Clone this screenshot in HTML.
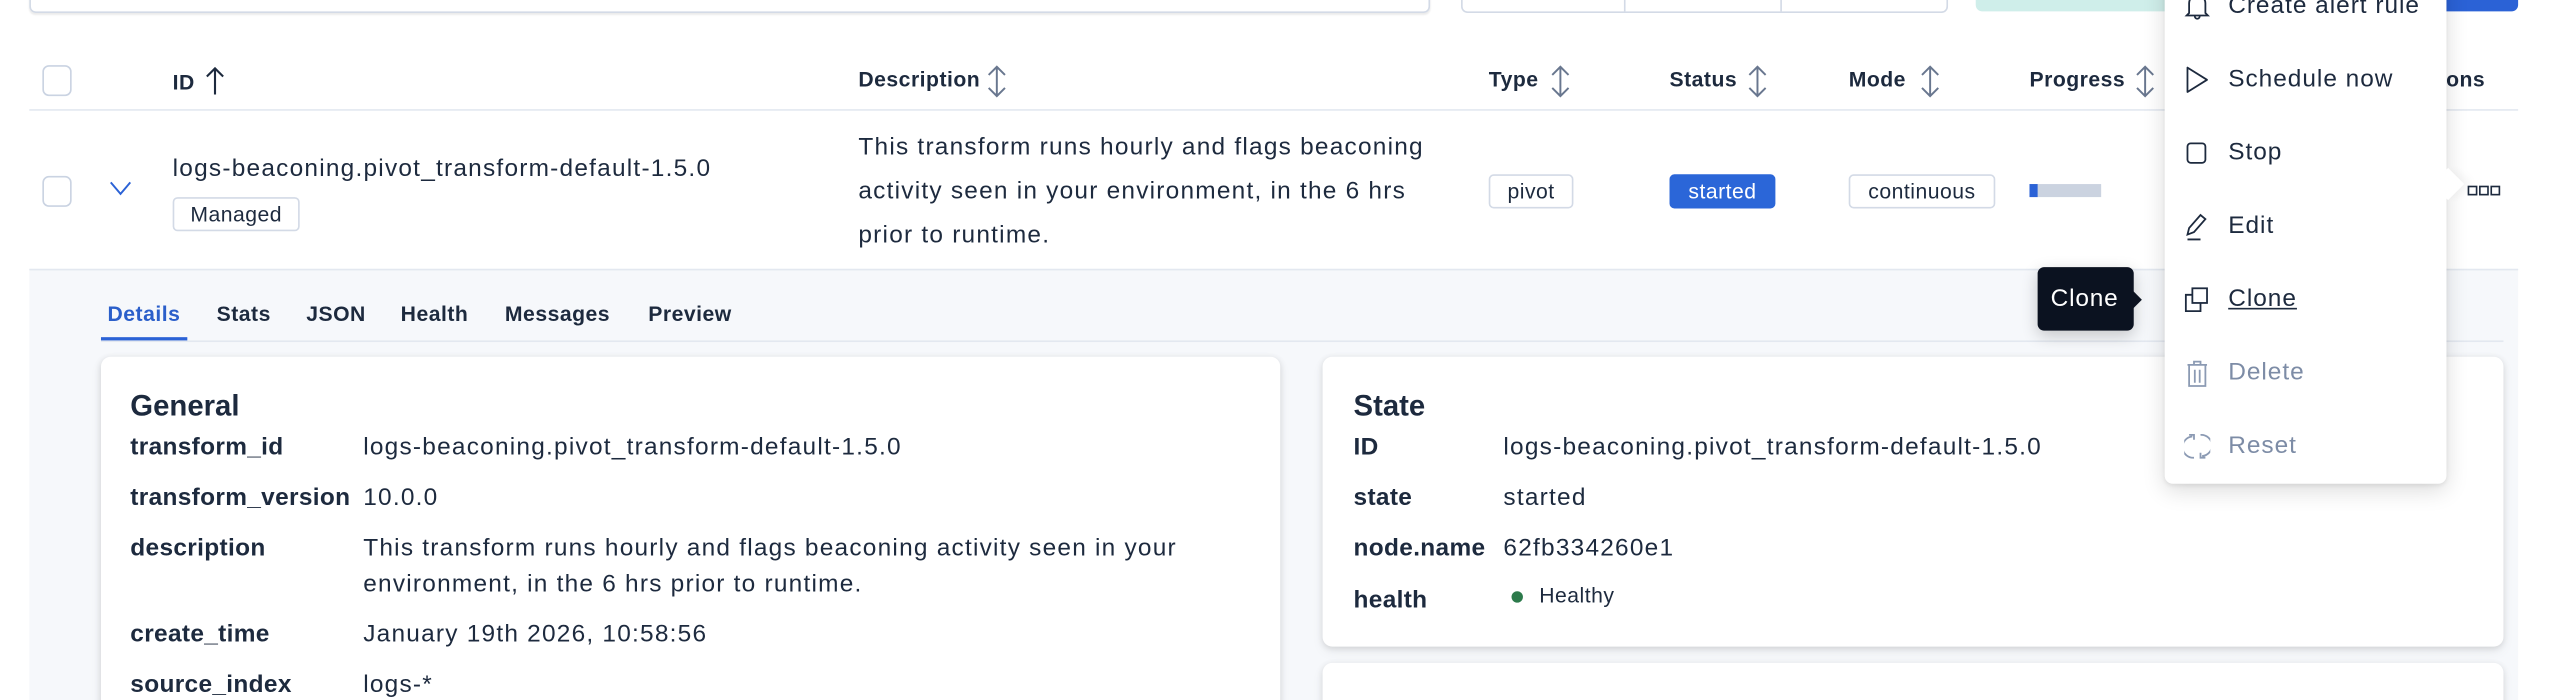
<!DOCTYPE html>
<html><head><meta charset="utf-8">
<style>
html,body{margin:0;padding:0;background:#fff;width:2554px;height:700px;overflow:hidden}
#w{position:absolute;left:0;top:0;width:1568px;height:430px;transform:scale(1.6288);transform-origin:0 0;font-family:"Liberation Sans",sans-serif;color:#1d2a3e;overflow:hidden}
.a{position:absolute;white-space:nowrap}
.hd{font-size:13px;font-weight:bold;color:#1d2a3e;top:41px;letter-spacing:0.3px}
.cb{position:absolute;width:16px;height:17px;border:1px solid #cad3e2;border-radius:4px;background:#fff}
.badge{position:absolute;height:19px;border:1px solid #d3dae6;border-radius:3px;background:#fff;font-size:13px;line-height:19px;text-align:center;color:#1d2a3e;letter-spacing:0.3px}
.t15{font-size:15px;letter-spacing:0.75px}
.lbl{font-size:15px;font-weight:bold;color:#1d2a3e;letter-spacing:0.2px}
.val{font-size:15px;color:#1d2a3e;letter-spacing:0.75px}
.panel{position:absolute;background:#fff;border-radius:6px;box-shadow:0 1px 4px rgba(0,0,0,.12),0 3px 8px rgba(0,0,0,.05)}
.mi{position:absolute;left:1368px;font-size:15px;color:#1d2a3e;letter-spacing:0.6px}
.ic{position:absolute;left:1341px}
.tab{position:absolute;top:185px;font-size:13px;font-weight:bold;letter-spacing:0.3px}
</style></head><body><div id="w">
<div class="a" style="left:18px;top:-10px;width:858px;height:16px;border:1px solid #d3dae6;border-radius:4px;box-shadow:0 1px 1px rgba(0,0,0,.08)"></div>
<div class="a" style="left:897px;top:-10px;width:297px;height:16px;border:1px solid #d3dae6;border-radius:4px"></div>
<div class="a" style="left:997px;top:-10px;width:1px;height:17px;background:#d3dae6"></div>
<div class="a" style="left:1093px;top:-10px;width:1px;height:17px;background:#d3dae6"></div>
<div class="a" style="left:1213px;top:-10px;width:140px;height:17px;background:#cfeeea;border-radius:4px"></div>
<div class="a" style="left:1440px;top:-10px;width:106px;height:17px;background:#2b62d6;border-radius:4px"></div>

<div class="cb" style="left:26px;top:40px"></div>
<div class="a hd" style="left:106px">ID <svg width="12" height="18" viewBox="0 0 12 18" style="vertical-align:-4px;margin-left:2px"><path d="M6 17V1M1 6l5-5 5 5" fill="none" stroke="#1d2a3e" stroke-width="1.3"/></svg></div>
<div class="a hd" style="left:527px">Description</div>
<div class="a hd" style="left:914px">Type</div>
<div class="a hd" style="left:1025px">Status</div>
<div class="a hd" style="left:1135px">Mode</div>
<div class="a hd" style="left:1246px">Progress</div>
<div class="a hd" style="left:1476px">Actions</div>
<svg class="a" style="left:605px;top:40px" width="14" height="20" viewBox="0 0 14 20"><path d="M7 1v18M2 6l5-5 5 5M2 14l5 5 5-5" fill="none" stroke="#69778f" stroke-width="1.2"/></svg>
<svg class="a" style="left:951px;top:40px" width="14" height="20" viewBox="0 0 14 20"><path d="M7 1v18M2 6l5-5 5 5M2 14l5 5 5-5" fill="none" stroke="#69778f" stroke-width="1.2"/></svg>
<svg class="a" style="left:1072px;top:40px" width="14" height="20" viewBox="0 0 14 20"><path d="M7 1v18M2 6l5-5 5 5M2 14l5 5 5-5" fill="none" stroke="#69778f" stroke-width="1.2"/></svg>
<svg class="a" style="left:1178px;top:40px" width="14" height="20" viewBox="0 0 14 20"><path d="M7 1v18M2 6l5-5 5 5M2 14l5 5 5-5" fill="none" stroke="#69778f" stroke-width="1.2"/></svg>
<svg class="a" style="left:1310px;top:40px" width="14" height="20" viewBox="0 0 14 20"><path d="M7 1v18M2 6l5-5 5 5M2 14l5 5 5-5" fill="none" stroke="#69778f" stroke-width="1.2"/></svg>
<div class="a" style="left:18px;top:67px;width:1528px;height:1px;background:#e3e8f0"></div>

<div class="cb" style="left:26px;top:108px"></div>
<svg class="a" style="left:67px;top:111px" width="14" height="10" viewBox="0 0 14 10"><path d="M1 1l6 7 6-7" fill="none" stroke="#2b62d6" stroke-width="1.2"/></svg>
<div class="a t15" style="left:106px;top:95px">logs-beaconing.pivot_transform-default-1.5.0</div>
<div class="badge" style="left:106px;top:121px;width:76px">Managed</div>
<div class="a t15" style="left:527px;top:77px;line-height:27px">This transform runs hourly and flags beaconing<br>activity seen in your environment, in the 6 hrs<br>prior to runtime.</div>
<div class="badge" style="left:914px;top:107px;width:50px">pivot</div>
<div class="badge" style="left:1025px;top:107px;width:63px;background:#2b66d8;border-color:#2b66d8;color:#fff">started</div>
<div class="badge" style="left:1135px;top:107px;width:88px">continuous</div>
<div class="a" style="left:1246px;top:113px;width:44px;height:8px;background:#cbd3e0"></div>
<div class="a" style="left:1246px;top:113px;width:5px;height:8px;background:#2b62d6"></div>
<div class="a" style="left:1515px;top:114px;font-size:0">
<span style="display:inline-block;width:4px;height:4px;border:1px solid #1d2a3e;margin-right:1px"></span><span style="display:inline-block;width:4px;height:4px;border:1px solid #1d2a3e;margin-right:1px"></span><span style="display:inline-block;width:4px;height:4px;border:1px solid #1d2a3e"></span></div>

<div class="a" style="left:18px;top:165px;width:1528px;height:265px;background:#f6f8fb;border-top:1px solid #e3e8f0"></div>
<div class="a" style="left:62px;top:209px;width:1475px;height:1px;background:#e3e8f0"></div>
<div class="a" style="left:62px;top:207px;width:53px;height:2px;background:#2b62d6"></div>
<div class="tab" style="left:66px;color:#2b5fca">Details</div>
<div class="tab" style="left:133px">Stats</div>
<div class="tab" style="left:188px">JSON</div>
<div class="tab" style="left:246px">Health</div>
<div class="tab" style="left:310px">Messages</div>
<div class="tab" style="left:398px">Preview</div>

<div class="panel" style="left:62px;top:219px;width:724px;height:220px"></div>
<div class="a" style="left:80px;top:239px;font-size:18px;font-weight:bold">General</div>
<div class="a lbl" style="left:80px;top:266px">transform_id</div><div class="a val" style="left:223px;top:266px">logs-beaconing.pivot_transform-default-1.5.0</div>
<div class="a lbl" style="left:80px;top:297px">transform_version</div><div class="a val" style="left:223px;top:297px">10.0.0</div>
<div class="a lbl" style="left:80px;top:328px">description</div><div class="a val" style="left:223px;top:328px;line-height:22px;margin-top:-2px">This transform runs hourly and flags beaconing activity seen in your<br>environment, in the 6 hrs prior to runtime.</div>
<div class="a lbl" style="left:80px;top:381px">create_time</div><div class="a val" style="left:223px;top:381px">January 19th 2026, 10:58:56</div>
<div class="a lbl" style="left:80px;top:412px">source_index</div><div class="a val" style="left:223px;top:412px">logs-*</div>

<div class="panel" style="left:812px;top:219px;width:725px;height:178px"></div>
<div class="panel" style="left:812px;top:407px;width:725px;height:40px"></div>
<div class="a" style="left:831px;top:239px;font-size:18px;font-weight:bold">State</div>
<div class="a lbl" style="left:831px;top:266px">ID</div><div class="a val" style="left:923px;top:266px">logs-beaconing.pivot_transform-default-1.5.0</div>
<div class="a lbl" style="left:831px;top:297px">state</div><div class="a val" style="left:923px;top:297px">started</div>
<div class="a lbl" style="left:831px;top:328px">node.name</div><div class="a val" style="left:923px;top:328px">62fb334260e1</div>
<div class="a lbl" style="left:831px;top:360px">health</div>
<div class="a" style="left:928px;top:363px;width:7px;height:7px;border-radius:50%;background:#2c7a4b"></div>
<div class="a" style="left:945px;top:358px;font-size:13px;letter-spacing:0.3px">Healthy</div>

<div class="a" style="left:1251px;top:164px;width:59px;height:39px;background:#0b1220;border-radius:4px;box-shadow:0 3px 10px rgba(0,0,0,.2)"></div>
<div class="a" style="left:1308px;top:177px;width:0;height:0;border-top:7px solid transparent;border-bottom:7px solid transparent;border-left:7px solid #0b1220"></div>
<div class="a" style="left:1259px;top:175px;font-size:15px;color:#fff;letter-spacing:0.5px">Clone</div>

<div class="a" style="left:1329px;top:-20px;width:173px;height:317px;background:#fff;border-radius:5px;box-shadow:0 4px 14px rgba(0,0,0,.14),0 1px 3px rgba(0,0,0,.08)"></div>
<div class="a" style="left:1496px;top:106px;width:14px;height:14px;background:#fff;transform:rotate(45deg);box-shadow:3px -3px 6px rgba(0,0,0,.05)"></div>
<div class="a" style="left:1488px;top:100px;width:14px;height:30px;background:#fff"></div>
<svg class="ic" style="top:-5px" width="16" height="18" viewBox="0 0 16 18"><path d="M3 13V7a5 5 0 0 1 10 0v6l1.5 1.5h-13zM6.5 15a1.5 1.5 0 0 0 3 0" fill="none" stroke="#1d2a3e" stroke-width="1.1"/></svg>
<div class="mi" style="top:-5px">Create alert rule</div>
<svg class="ic" style="top:40px" width="16" height="18" viewBox="0 0 16 18"><path d="M2 1.5v15l12-7.5z" fill="none" stroke="#1d2a3e" stroke-width="1.1" stroke-linejoin="round"/></svg>
<div class="mi" style="top:40px">Schedule now</div>
<svg class="ic" style="top:86px" width="16" height="16" viewBox="0 0 16 16"><rect x="2" y="2" width="11" height="12" rx="2" fill="none" stroke="#1d2a3e" stroke-width="1.1"/></svg>
<div class="mi" style="top:85px">Stop</div>
<svg class="ic" style="top:130px" width="16" height="18" viewBox="0 0 16 18"><path d="M2 14l1-4 7-8 3 2.5-7 8zM10 2l3 2.5M2 17h8" fill="none" stroke="#1d2a3e" stroke-width="1.1"/></svg>
<div class="mi" style="top:130px">Edit</div>
<svg class="ic" style="top:176px" width="16" height="16" viewBox="0 0 16 16"><rect x="5" y="1" width="9" height="9" fill="none" stroke="#1d2a3e" stroke-width="1.1"/><path d="M5 5H1v10h9v-5" fill="none" stroke="#1d2a3e" stroke-width="1.1"/></svg>
<div class="mi" style="top:175px;text-decoration:underline">Clone</div>
<svg class="ic" style="top:220px" width="16" height="18" viewBox="0 0 16 18"><path d="M3 4h10v13H3zM2 4h12M6 4V2h4v2M6.5 7v8M9.5 7v8" fill="none" stroke="#8b9ab3" stroke-width="1.1"/></svg>
<div class="mi" style="top:220px;color:#7d8ca6">Delete</div>
<svg class="ic" style="top:265px" width="16" height="18" viewBox="0 0 16 18"><path d="M5 3a6.5 6.5 0 0 0 1 13M11 15a6.5 6.5 0 0 0-1-13M3 2h3v3M13 16h-3v-3" fill="none" stroke="#8b9ab3" stroke-width="1.1"/></svg>
<div class="mi" style="top:265px;color:#7d8ca6">Reset</div>
</div></body></html>
